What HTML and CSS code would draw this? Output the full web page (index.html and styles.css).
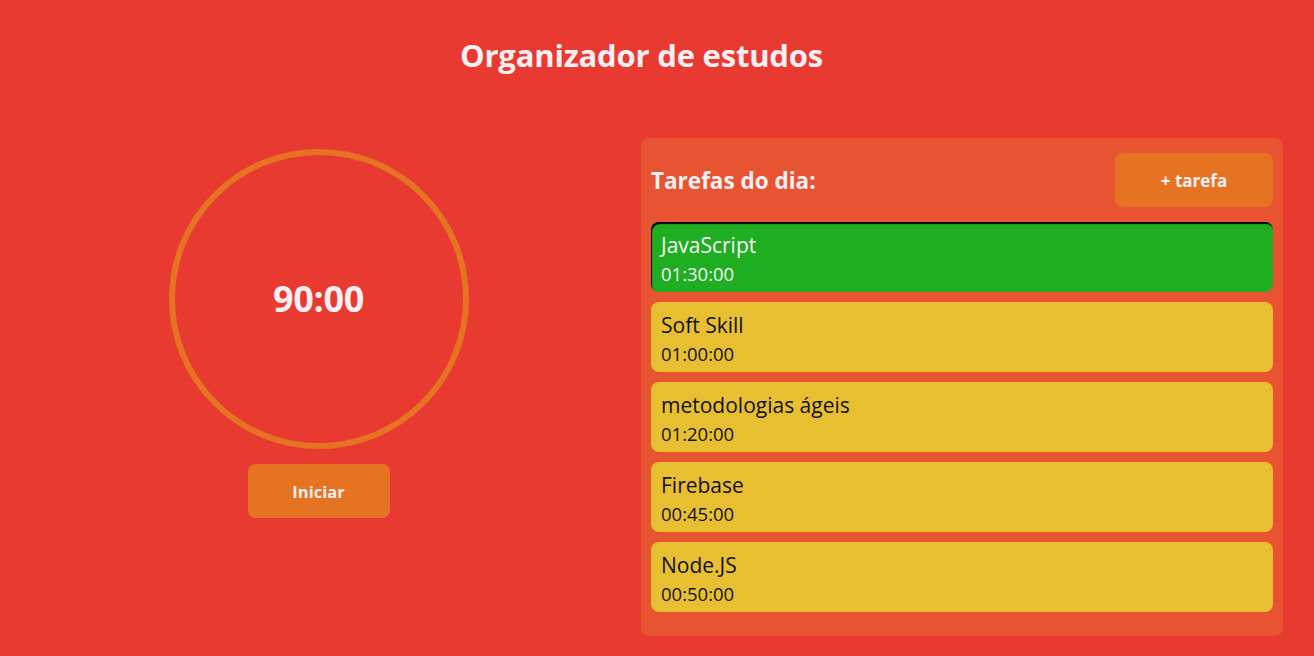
FILE: index.html
```html
<!DOCTYPE html>
<html lang="pt-BR">
<head>
<meta charset="utf-8">
<title>Organizador de estudos</title>
<link rel="stylesheet" href="styles.css">
</head>
<body>
<div class="app">
  <h1 class="title">Organizador de estudos</h1>
  <main class="main">
    <section class="timer">
      <div class="ring"><span class="time">90:00</span></div>
      <button class="btn btn-start">Iniciar</button>
    </section>
    <section class="panel">
      <div class="panel-head">
        <h2 class="panel-title">Tarefas do dia:</h2>
        <button class="btn btn-add">+ tarefa</button>
      </div>
      <ul class="tasks">
        <li class="task active"><p class="task-name">JavaScript</p><p class="task-time">01:30:00</p></li>
        <li class="task"><p class="task-name">Soft Skill</p><p class="task-time">01:00:00</p></li>
        <li class="task"><p class="task-name">metodologias ágeis</p><p class="task-time">01:20:00</p></li>
        <li class="task"><p class="task-name">Firebase</p><p class="task-time">00:45:00</p></li>
        <li class="task"><p class="task-name">Node.JS</p><p class="task-time">00:50:00</p></li>
      </ul>
    </section>
  </main>
</div>
</body>
</html>
```

FILE: styles.css
```css
* { box-sizing: border-box; }
html, body { margin: 0; padding: 0; }
body {
  background: #e83a31;
  font-family: "Open Sans", "Noto Sans", sans-serif;
  color: #f8eff3;
  height: 656px;
  overflow: hidden;
}
.app { width: 1283px; }
.title {
  margin: 0;
  padding-top: 34px;
  height: 138px;
  text-align: center;
  font-size: 31px;
  font-weight: 700;
  line-height: 42px;
  letter-spacing: -0.2px;
}
.main {
  display: grid;
  grid-template-columns: 641px 642px;
}
.timer {
  display: flex;
  flex-direction: column;
  align-items: center;
  padding-top: 11px;
  padding-right: 4px;
}
.ring {
  width: 300px;
  height: 300px;
  border-radius: 50%;
  border: 6px solid #e67322;
  display: flex;
  align-items: center;
  justify-content: center;
}
.time {
  font-size: 36px;
  font-weight: 700;
  letter-spacing: -0.3px;
  line-height: 1;
}
.btn {
  border: none;
  border-radius: 8px;
  background: #e67322;
  color: #f8eff3;
  font-family: inherit;
  font-weight: 700;
  cursor: pointer;
}
.btn-start {
  margin-top: 15px;
  width: 142px;
  height: 54px;
  font-size: 16.5px;
}
.panel {
  background: #e85431;
  border-radius: 8px;
  padding: 15px 10px 24px 10px;
  height: 498px;
}
.panel-head {
  display: flex;
  align-items: center;
  justify-content: space-between;
  height: 54px;
}
.panel-title {
  margin: 0;
  font-size: 22.5px;
  font-weight: 700;
  letter-spacing: 0;
}
.btn-add {
  width: 158px;
  height: 54px;
  font-size: 17px;
}
.tasks {
  list-style: none;
  margin: 15px 0 0 0;
  padding: 0;
  display: flex;
  flex-direction: column;
  gap: 10px;
}
.task {
  height: 70px;
  border-radius: 8px;
  background: #e8bf30;
  color: #111;
  padding: 9px 10px;
}
.task.active {
  background: #1fad21;
  color: #f8f8f8;
  box-shadow: inset 1px 2px 1px #000;
}
.task p { margin: 0; }
.task-name {
  font-size: 21px;
  line-height: 28px;
}
.task-time {
  font-size: 18.5px;
  line-height: 30px;
}
```
